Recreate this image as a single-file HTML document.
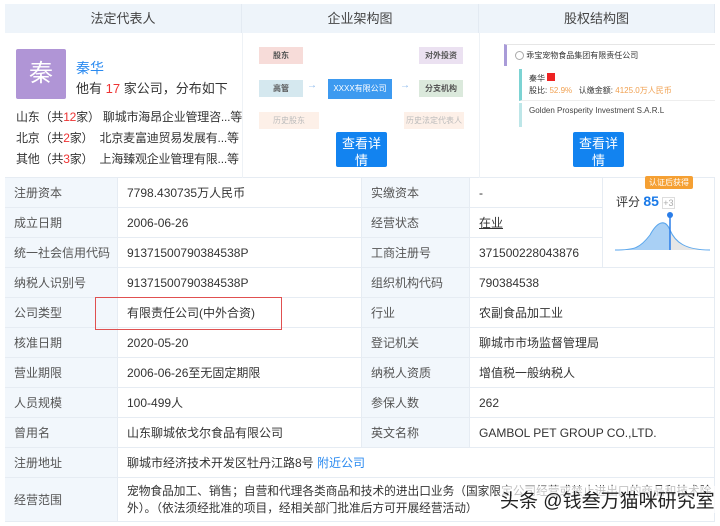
<!DOCTYPE html>
<html><head><meta charset="utf-8"><style>
*{margin:0;padding:0;box-sizing:border-box}
body{width:720px;height:526px;background:#fff;font-family:"Liberation Sans","Noto Sans CJK SC",sans-serif;font-size:12px;color:#333;position:relative;overflow:hidden}
.a{position:absolute}
.hd{background:#eef4fa;height:29px;top:4px;line-height:29px;text-align:center;font-size:13px;color:#444;border-right:1px solid #e3eaf2}
.c{position:absolute;border-bottom:1px solid #e6ecf3;border-right:1px solid #e6ecf3;padding-left:9px;display:flex;align-items:center}
.l{background:#f2f7fc;color:#555}
.btn{background:#1283f0;color:#fff;font-size:13px;text-align:center;line-height:17px;padding-top:3px;border-radius:2px}
.box{font-size:8px;text-align:center;line-height:17px;font-weight:bold;color:#555}
</style></head><body>
<div class="a hd" style="left:5px;width:237px">法定代表人</div>
<div class="a hd" style="left:242px;width:237px">企业架构图</div>
<div class="a hd" style="left:479px;width:236px">股权结构图</div>
<div class="a" style="left:5px;top:33px;width:710px;height:145px;border-bottom:1px solid #e6ecf3"></div>
<div class="a" style="left:242px;top:33px;width:1px;height:145px;background:#eef2f6"></div>
<div class="a" style="left:479px;top:33px;width:1px;height:145px;background:#eef2f6"></div>
<!-- legal rep -->
<div class="a" style="left:16px;top:49px;width:50px;height:50px;background:#b095d6;color:#fff;font-size:24px;text-align:center;line-height:50px;border-radius:2px">秦</div>
<div class="a" style="left:76px;top:58px;color:#2a8af0;font-size:14px">秦华</div>
<div class="a" style="left:76px;top:78px;font-size:13px">他有 <span style="color:#e33">17</span> 家公司，分布如下</div>
<div class="a" style="left:16px;top:107px;font-size:12px;line-height:21px;white-space:nowrap;letter-spacing:-0.2px">山东（共<span style="color:#e33">12</span>家）&nbsp;聊城市海昂企业管理咨...等<br>北京（共<span style="color:#e33">2</span>家）&nbsp;&nbsp;北京麦富迪贸易发展有...等<br>其他（共<span style="color:#e33">3</span>家）&nbsp;&nbsp;上海臻观企业管理有限...等</div>
<!-- org chart -->
<div class="a box" style="left:259px;top:47px;width:44px;background:#f7dcd9">股东</div>
<div class="a box" style="left:259px;top:80px;width:44px;background:#d5e8ef">高管</div>
<div class="a box" style="left:259px;top:112px;width:60px;background:#fdf0e8;color:#bbb;font-weight:normal">历史股东</div>
<div class="a box" style="left:328px;top:79px;width:64px;background:#3d9af0;color:#fff;font-weight:normal;line-height:20px">XXXX有限公司</div>
<div class="a box" style="left:419px;top:47px;width:44px;background:#ebe1f1">对外投资</div>
<div class="a box" style="left:419px;top:80px;width:44px;background:#dbe9dc">分支机构</div>
<div class="a box" style="left:404px;top:112px;width:60px;background:#fdf0e8;color:#bbb;font-weight:normal">历史法定代表人</div>
<div class="a" style="left:307px;top:80px;color:#8ab8ec;font-size:10px">→</div>
<div class="a" style="left:400px;top:80px;color:#8ab8ec;font-size:10px">→</div>
<div class="a btn" style="left:336px;top:132px;width:51px;height:35px">查看详<br>情</div>
<!-- equity -->
<div class="a" style="left:504px;top:44px;width:211px;height:22px;border-top:1px solid #e6e6e6;border-left:3px solid #a99bd8;font-size:8px;line-height:22px;padding-left:8px;color:#333"><span style="display:inline-block;width:9px;height:9px;border:1px solid #aaa;border-radius:50%;vertical-align:middle"></span> 乖宝宠物食品集团有限责任公司</div>
<div class="a" style="left:519px;top:69px;width:196px;height:32px;border-left:3px solid #7cd3d3;border-bottom:1px solid #eee;font-size:8px;padding:4px 0 0 7px;line-height:12px">秦华 <span style="display:inline-block;width:8px;height:8px;background:#e22"></span><br>股比: <span style="color:#f0a050">52.9%</span> &nbsp;&nbsp;认缴金额: <span style="color:#f0a050">4125.0万人民币</span></div>
<div class="a" style="left:519px;top:103px;width:196px;height:24px;border-left:3px solid #bde6e8;font-size:8px;padding:3px 0 0 7px;color:#444">Golden Prosperity Investment S.A.R.L</div>
<div class="a btn" style="left:573px;top:132px;width:51px;height:35px">查看详<br>情</div>
<!-- table -->
<div class="c l" style="left:5px;top:178px;width:113px;height:30px">注册资本</div>
<div class="c" style="left:118px;top:178px;width:244px;height:30px">7798.430735万人民币</div>
<div class="c l" style="left:362px;top:178px;width:108px;height:30px">实缴资本</div>
<div class="c" style="left:470px;top:178px;width:133px;height:30px">-</div>
<div class="c l" style="left:5px;top:208px;width:113px;height:30px">成立日期</div>
<div class="c" style="left:118px;top:208px;width:244px;height:30px">2006-06-26</div>
<div class="c l" style="left:362px;top:208px;width:108px;height:30px">经营状态</div>
<div class="c" style="left:470px;top:208px;width:133px;height:30px"><u>在业</u></div>
<div class="c l" style="left:5px;top:238px;width:113px;height:30px">统一社会信用代码</div>
<div class="c" style="left:118px;top:238px;width:244px;height:30px">91371500790384538P</div>
<div class="c l" style="left:362px;top:238px;width:108px;height:30px">工商注册号</div>
<div class="c" style="left:470px;top:238px;width:133px;height:30px">371500228043876</div>
<div class="c" style="left:603px;top:178px;width:112px;height:90px"></div>
<div class="a" style="left:645px;top:176px;background:#f5a033;color:#fff;font-size:8px;padding:1px 4px;border-radius:2px">认证后获得</div>
<div class="a" style="left:616px;top:193px;font-size:12px">评分 <b style="color:#1a7ae8;font-size:14px">85</b> <span style="color:#aaa;font-size:9px;border:1px solid #ddd">+3</span></div>
<svg class="a" style="left:615px;top:210px" width="95" height="45"><path d="M0 40 C20 40 25 38 35 25 C42 12 50 8 55 20 L55 40 Z" fill="#a9d0f5"/><path d="M55 20 C60 32 70 40 95 40 L55 40Z" fill="#e6e6e6"/><path d="M0 40 C20 40 25 38 35 25 C42 12 50 8 55 20 C60 32 70 40 95 40" fill="none" stroke="#5aa6ec"/><line x1="55" y1="5" x2="55" y2="40" stroke="#2a7de8" stroke-width="1.5"/><circle cx="55" cy="5" r="3" fill="#2a7de8"/></svg>
<div class="c l" style="left:5px;top:268px;width:113px;height:30px">纳税人识别号</div>
<div class="c" style="left:118px;top:268px;width:244px;height:30px">91371500790384538P</div>
<div class="c l" style="left:362px;top:268px;width:108px;height:30px">组织机构代码</div>
<div class="c" style="left:470px;top:268px;width:245px;height:30px">790384538</div>
<div class="c l" style="left:5px;top:298px;width:113px;height:30px">公司类型</div>
<div class="c" style="left:118px;top:298px;width:244px;height:30px">有限责任公司(中外合资)</div>
<div class="c l" style="left:362px;top:298px;width:108px;height:30px">行业</div>
<div class="c" style="left:470px;top:298px;width:245px;height:30px">农副食品加工业</div>
<div class="c l" style="left:5px;top:328px;width:113px;height:30px">核准日期</div>
<div class="c" style="left:118px;top:328px;width:244px;height:30px">2020-05-20</div>
<div class="c l" style="left:362px;top:328px;width:108px;height:30px">登记机关</div>
<div class="c" style="left:470px;top:328px;width:245px;height:30px">聊城市市场监督管理局</div>
<div class="c l" style="left:5px;top:358px;width:113px;height:30px">营业期限</div>
<div class="c" style="left:118px;top:358px;width:244px;height:30px">2006-06-26至无固定期限</div>
<div class="c l" style="left:362px;top:358px;width:108px;height:30px">纳税人资质</div>
<div class="c" style="left:470px;top:358px;width:245px;height:30px">增值税一般纳税人</div>
<div class="c l" style="left:5px;top:388px;width:113px;height:30px">人员规模</div>
<div class="c" style="left:118px;top:388px;width:244px;height:30px">100-499人</div>
<div class="c l" style="left:362px;top:388px;width:108px;height:30px">参保人数</div>
<div class="c" style="left:470px;top:388px;width:245px;height:30px">262</div>
<div class="c l" style="left:5px;top:418px;width:113px;height:30px">曾用名</div>
<div class="c" style="left:118px;top:418px;width:244px;height:30px">山东聊城依戈尔食品有限公司</div>
<div class="c l" style="left:362px;top:418px;width:108px;height:30px">英文名称</div>
<div class="c" style="left:470px;top:418px;width:245px;height:30px">GAMBOL PET GROUP CO.,LTD.</div>
<div class="c l" style="left:5px;top:448px;width:113px;height:30px">注册地址</div>
<div class="c" style="left:118px;top:448px;width:597px;height:30px">聊城市经济技术开发区牡丹江路8号&nbsp;<span style="color:#2a8af0">附近公司</span></div>
<div class="c l" style="left:5px;top:478px;width:113px;height:44px">经营范围</div>
<div class="c" style="left:118px;top:478px;width:597px;height:44px;line-height:17px;font-size:11.7px;padding-right:2px">宠物食品加工、销售；自营和代理各类商品和技术的进出口业务（国家限定公司经营或禁止进出口的商品和技术除外）。（依法须经批准的项目，经相关部门批准后方可开展经营活动）</div>
<div class="a" style="left:95px;top:297px;width:187px;height:33px;border:1.5px solid #e05050"></div>
<div class="a" style="left:500px;top:486px;font-size:19px;color:#222;background:rgba(255,255,255,.7);text-shadow:0 0 2px #fff">头条 @钱叁万猫咪研究室</div>
</body></html>
